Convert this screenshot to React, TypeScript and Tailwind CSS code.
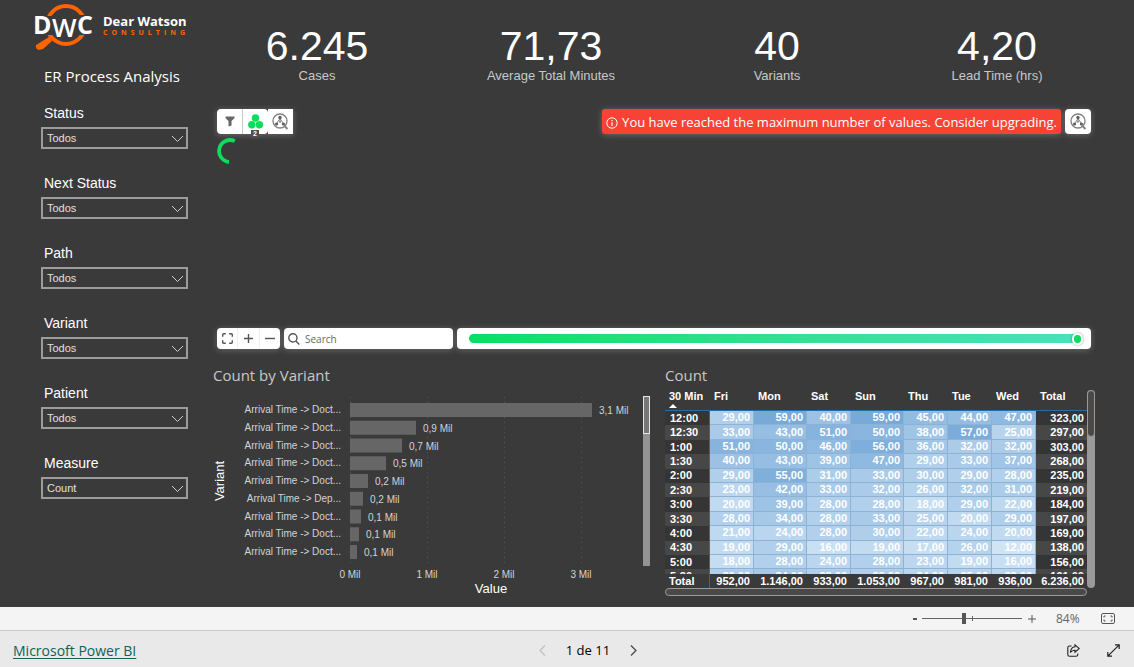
import React from "react";

const slicers = [
  { id: "status", label: "Status", value: "Todos" },
  { id: "next-status", label: "Next Status", value: "Todos" },
  { id: "path", label: "Path", value: "Todos" },
  { id: "variant", label: "Variant", value: "Todos" },
  { id: "patient", label: "Patient", value: "Todos" },
  { id: "measure", label: "Measure", value: "Count" },
];

const kpis = [
  { value: "6.245", label: "Cases" },
  { value: "71,73", label: "Average Total Minutes" },
  { value: "40", label: "Variants" },
  { value: "4,20", label: "Lead Time (hrs)" },
];

const bars = [
  { name: "Arrival Time -> Doct...", width: 242, label: "3,1 Mil" },
  { name: "Arrival Time -> Doct...", width: 66, label: "0,9 Mil" },
  { name: "Arrival Time -> Doct...", width: 52, label: "0,7 Mil" },
  { name: "Arrival Time -> Doct...", width: 36, label: "0,5 Mil" },
  { name: "Arrival Time -> Doct...", width: 18, label: "0,2 Mil" },
  { name: "Arrival Time -> Dep...", width: 13, label: "0,2 Mil" },
  { name: "Arrival Time -> Doct...", width: 11, label: "0,1 Mil" },
  { name: "Arrival Time -> Doct...", width: 9, label: "0,1 Mil" },
  { name: "Arrival Time -> Doct...", width: 7, label: "0,1 Mil" },
];

const days = ["Fri", "Mon", "Sat", "Sun", "Thu", "Tue", "Wed"];

const rows: { time: string; cells: number[]; total: string }[] = [
  { time: "12:00", cells: [29, 59, 40, 59, 45, 44, 47], total: "323,00" },
  { time: "12:30", cells: [33, 43, 51, 50, 38, 57, 25], total: "297,00" },
  { time: "1:00", cells: [51, 50, 46, 56, 36, 32, 32], total: "303,00" },
  { time: "1:30", cells: [40, 43, 39, 47, 29, 33, 37], total: "268,00" },
  { time: "2:00", cells: [29, 55, 31, 33, 30, 29, 28], total: "235,00" },
  { time: "2:30", cells: [23, 42, 33, 32, 26, 32, 31], total: "219,00" },
  { time: "3:00", cells: [20, 39, 28, 28, 18, 29, 22], total: "184,00" },
  { time: "3:30", cells: [28, 34, 28, 33, 25, 20, 29], total: "197,00" },
  { time: "4:00", cells: [21, 24, 28, 30, 22, 24, 20], total: "169,00" },
  { time: "4:30", cells: [19, 29, 16, 19, 17, 26, 12], total: "138,00" },
  { time: "5:00", cells: [18, 28, 24, 28, 23, 19, 16], total: "156,00" },
  { time: "5:30", cells: [29, 34, 28, 28, 24, 25, 23], total: "191,00" },
];

const totals = ["952,00", "1.146,00", "933,00", "1.053,00", "967,00", "981,00", "936,00", "6.236,00"];

function heat(value: number) {
  const t = (value - 12) / 47;
  const mix = (a: number, b: number) => Math.round(a + (b - a) * t);
  return `rgb(${mix(208, 120)}, ${mix(228, 170)}, ${mix(245, 217)})`;
}

function Logo() {
  return (
    <div className="flex h-[52px] items-start pl-[33px]">
      <svg width="64" height="52" viewBox="-2 0 64 52" aria-label="DWC" role="img">
        <circle cx="31" cy="25" r="19" fill="none" stroke="#ff6400" strokeWidth="4" />
        <path d="M14 37 L1 45 Q0 49 4 50 L8 49 L17 41 Z" fill="#ff6400" />
        <rect x="0" y="16" width="20" height="19" fill="#3a3a3a" />
        <rect x="41" y="15" width="20" height="20" fill="#3a3a3a" />
        <g fill="#fff" fontFamily="'Open Sans', sans-serif" fontWeight="700">
          <text x="-2" y="34" fontSize="25">D</text>
          <text x="17" y="37" fontSize="26" fontWeight="600">W</text>
          <text x="42" y="34" fontSize="25">C</text>
        </g>
      </svg>
      <div className="ml-[6px] pt-[13px]">
        <div className="whitespace-nowrap font-['Open_Sans',sans-serif] text-[13px] font-bold leading-[16px] text-white">
          Dear Watson
        </div>
        <div className="font-['Open_Sans',sans-serif] text-[7px] font-bold leading-[8px] tracking-[4px] text-[#ff6400]">
          CONSULTING
        </div>
      </div>
    </div>
  );
}

function Slicer({ id, label, value }: { id: string; label: string; value: string }) {
  return (
    <div className="flex flex-col gap-1">
      <label htmlFor={id} className="pl-[3px] text-[14px] leading-5 text-white">
        {label}
      </label>
      <div className="relative">
        <select
          id={id}
          defaultValue={value}
          className="block h-[22px] w-full appearance-none rounded-none border-2 border-[#9c9c9c] bg-[#3a3a3a] pl-1 text-[11px] leading-[16px] text-[#e0e0e0]"
        >
          <option>{value}</option>
        </select>
        <svg
          className="pointer-events-none absolute right-1 top-2"
          width="13"
          height="8"
          viewBox="0 0 13 8"
          fill="none"
          stroke="#d0d0d0"
        >
          <path d="M1 1 L6.5 6.5 L12 1" />
        </svg>
      </div>
    </div>
  );
}

function ProcessIcon() {
  return (
    <svg width="17" height="17" viewBox="0 0 17 17" fill="none" stroke="#808080" strokeWidth="1.3">
      <circle cx="8" cy="8" r="7" />
      <path d="M8 5 V8 M8 5.5 L4.6 10.5 M8 5.5 L11.4 10.5" strokeWidth="1" />
      <path d="M12 12.5 L15.5 16" strokeWidth="1.8" />
      <g fill="#606060" stroke="none">
        <circle cx="8" cy="4.5" r="1.7" />
        <circle cx="4.6" cy="11" r="1.6" />
        <circle cx="8" cy="8.8" r="0.9" />
        <circle cx="11.4" cy="11" r="1.6" />
      </g>
    </svg>
  );
}

function TopToolbar() {
  return (
    <div className="flex h-[25px] items-stretch gap-1">
      <div className="flex shadow-[0_1px_6px_rgba(255,255,255,0.25)]">
        <button aria-label="Filter" className="flex w-[25px] items-center justify-center rounded-l-[4px] bg-white">
          <svg width="10" height="11" viewBox="0 0 10 11" fill="#666">
            <path d="M0.5 0.5 H9.5 V2 L6.5 5 V9.5 L3.5 10.5 V5 L0.5 2 Z" />
          </svg>
        </button>
        <button
          aria-label="Groups"
          className="relative flex w-[26px] items-center justify-center rounded-r-[4px] border-l border-[#c8c8c8] bg-white"
        >
          <svg width="16" height="15" viewBox="0 0 16 15" fill="#0ddc5c">
            <circle cx="7.5" cy="4" r="3.7" />
            <circle cx="3.8" cy="10.7" r="3.7" />
            <circle cx="11.4" cy="10.7" r="3.7" />
          </svg>
          <span className="absolute -bottom-1 left-2 h-2 w-2 bg-[#505050] text-center text-[7px] font-bold leading-[8px] text-white">
            2
          </span>
        </button>
        <button aria-label="Process view" className="flex w-[25px] items-center justify-center bg-white">
          <ProcessIcon />
        </button>
      </div>
      <div className="flex-1" />
      <div className="flex items-center gap-1 whitespace-nowrap rounded-[3px] bg-[#f64336] px-1 pt-[2px] font-['Open_Sans',sans-serif] text-[13px] text-white shadow-[0_1px_6px_rgba(255,255,255,0.25)]">
        <svg width="12" height="12" viewBox="0 0 12 12" fill="none" stroke="#fff">
          <circle cx="6" cy="6" r="5.2" />
          <path d="M6 5.2 V9 M6 3 V4.2" strokeWidth="1.2" />
        </svg>
        You have reached the maximum number of values. Consider upgrading.
      </div>
      <button
        aria-label="Process search"
        className="flex w-[26px] items-center justify-center rounded-[4px] bg-white shadow-[0_1px_6px_rgba(255,255,255,0.25)]"
      >
        <ProcessIcon />
      </button>
    </div>
  );
}

function BottomToolbar() {
  const stroke = { fill: "none", stroke: "#555", strokeWidth: 1.4 };
  return (
    <div className="flex h-[21px] items-stretch gap-1">
      <div className="flex w-[63px] rounded-[4px] bg-white shadow-[0_1px_6px_rgba(255,255,255,0.25)]">
        <button aria-label="Fit" className="flex flex-1 items-center justify-center">
          <svg width="11" height="11" viewBox="0 0 11 11" {...stroke}>
            <path d="M0.7 3.8 V1.7 Q0.7 0.7 1.7 0.7 H3.8 M7.2 0.7 H9.3 Q10.3 0.7 10.3 1.7 V3.8 M10.3 7.2 V9.3 Q10.3 10.3 9.3 10.3 H7.2 M3.8 10.3 H1.7 Q0.7 10.3 0.7 9.3 V7.2" />
          </svg>
        </button>
        <button aria-label="Zoom in" className="flex flex-1 items-center justify-center border-l border-[#f0f0f0]">
          <svg width="9" height="9" viewBox="0 0 9 9" {...stroke}>
            <path d="M4.5 0 V9 M0 4.5 H9" />
          </svg>
        </button>
        <button aria-label="Zoom out" className="flex flex-1 items-center justify-center border-l border-[#f0f0f0]">
          <svg width="10" height="9" viewBox="0 0 10 9" {...stroke}>
            <path d="M0 4.5 H10" />
          </svg>
        </button>
      </div>
      <label className="flex w-[169px] items-center gap-[5px] rounded-[4px] bg-white pl-1 shadow-[0_1px_6px_rgba(255,255,255,0.25)]">
        <svg className="shrink-0" width="12" height="12" viewBox="0 0 12 12" {...stroke}>
          <circle cx="4.9" cy="4.9" r="4.1" />
          <path d="M7.8 8 L11.3 11.5" />
        </svg>
        <input
          type="text"
          placeholder="Search"
          aria-label="Search"
          className="w-full min-w-0 bg-transparent pt-px font-['Open_Sans',sans-serif] text-[10px] text-[#444] outline-none placeholder:text-[#666]"
        />
      </label>
      <div className="flex flex-1 items-center rounded-[4px] bg-white pl-3 pr-2 shadow-[0_1px_6px_rgba(255,255,255,0.25)]">
        <input
          type="range"
          aria-label="Detail level"
          min={0}
          max={100}
          defaultValue={100}
          className="h-[9px] w-full appearance-none rounded-full bg-linear-to-r from-[#0bdd60] to-[#46e3bb] [&::-webkit-slider-thumb]:h-[12px] [&::-webkit-slider-thumb]:w-[11px] [&::-webkit-slider-thumb]:appearance-none [&::-webkit-slider-thumb]:rounded-full [&::-webkit-slider-thumb]:border-2 [&::-webkit-slider-thumb]:border-white [&::-webkit-slider-thumb]:bg-[#0bdd60] [&::-webkit-slider-thumb]:shadow-[0_0_3px_rgba(0,0,0,0.35)]"
        />
      </div>
    </div>
  );
}

function VariantChart() {
  return (
    <svg
      className="h-[213px] w-full"
      viewBox="0 0 452 213"
      preserveAspectRatio="xMinYMin meet"
      fontFamily="'Liberation Sans', Arial, sans-serif"
      fontSize="10"
      fill="#d4d4d4"
    >
      {[0, 1, 2, 3].map((tick) => (
        <g key={tick}>
          <line
            x1={137.5 + tick * 77}
            x2={137.5 + tick * 77}
            y1="10"
            y2="179"
            stroke="#555"
            strokeDasharray="1 4"
          />
          <text x={137 + tick * 77} y="191" textAnchor="middle">
            {tick} Mil
          </text>
        </g>
      ))}
      {bars.map((bar, i) => {
        const y = 16 + i * 17.75;
        return (
          <g key={i}>
            <text x="128" y={y + 10} textAnchor="end">
              {bar.name}
            </text>
            <rect x="137" y={y} width={bar.width} height="14" fill="#666" />
            <text x={144 + bar.width} y={y + 11}>
              {bar.label}
            </text>
          </g>
        );
      })}
      <text x="278" y="206" fontSize="13" fill="#fff" textAnchor="middle">
        Value
      </text>
      <text fontSize="13" fill="#fff" textAnchor="middle" transform="translate(11 94) rotate(-90)">
        Variant
      </text>
      <rect x="430" y="9" width="7" height="170" fill="#939393" />
      <rect x="430.5" y="9.5" width="6" height="37" fill="#777" stroke="#e6e6e6" />
    </svg>
  );
}

function MatrixColumns() {
  return (
    <colgroup>
      <col className="w-[45px]" />
      <col className="w-[44px]" />
      <col className="w-[53px]" />
      <col className="w-[44px]" />
      <col className="w-[53px]" />
      <col className="w-[44px]" />
      <col className="w-[44px]" />
      <col className="w-[44px]" />
      <col className="w-[51px]" />
    </colgroup>
  );
}

function CountMatrix() {
  return (
    <div className="grid grid-cols-[422px_8px] text-[11px] font-bold leading-[13px] text-white">
      <div>
        <div className="h-[187px] overflow-hidden">
          <table className="h-[197px] w-[422px] table-fixed border-separate border-spacing-0">
            <MatrixColumns />
            <thead>
              <tr className="h-6">
                <th className="whitespace-nowrap border-b border-[#2b6ca0] pl-1 pt-[3px] text-left align-top">
                  30 Min
                  <svg className="mt-px" width="8" height="4" viewBox="0 0 8 4" fill="#fff">
                    <path d="M0 4 L4 0 L8 4 Z" />
                  </svg>
                </th>
                {[...days, "Total"].map((day) => (
                  <th key={day} className="border-b border-[#2b6ca0] pl-1 pt-[3px] text-left align-top">
                    {day}
                  </th>
                ))}
              </tr>
            </thead>
            <tbody>
              {rows.map((row) => (
                <tr key={row.time} className="bg-[#353535] even:bg-[#474747]">
                  <th className="border-r border-[#2b6ca0] pl-[5px] text-left">{row.time}</th>
                  {row.cells.map((cell, i) => (
                    <td
                      key={i}
                      className="border-b border-r border-[#8db2d3] pr-[3px] text-right"
                      style={{ backgroundColor: heat(cell) }}
                    >
                      {cell},00
                    </td>
                  ))}
                  <td className="pr-[3px] text-right">{row.total}</td>
                </tr>
              ))}
            </tbody>
          </table>
        </div>
        <table className="w-[422px] table-fixed border-separate border-spacing-0">
          <MatrixColumns />
          <tbody>
            <tr className="h-[14px]">
              <th className="border-r border-[#2b6ca0] pl-1 text-left">Total</th>
              {totals.map((total, i) => (
                <td key={i} className="pr-1 text-right last:pr-[3px]">
                  {total}
                </td>
              ))}
            </tr>
          </tbody>
        </table>
      </div>
      <div className="mt-[3px] rounded-full bg-[#9a9a9a]">
        <div className="h-[47px] rounded-full border border-[#9a9a9a] bg-[#4b4947]" />
      </div>
      <div className="h-2 rounded-full border border-[#9a9a9a] bg-[#4b4947]" />
    </div>
  );
}

function ZoomBar() {
  return (
    <div className="flex h-6 items-center justify-end border-b border-[#c8c8c8] bg-[#f4f4f4] pr-[19px] text-[#555]">
      <button aria-label="Zoom out" className="flex h-5 w-[9px] items-center">
        <svg width="4" height="2" viewBox="0 0 4 2" fill="#555">
          <rect width="4" height="2" />
        </svg>
      </button>
      <div className="relative flex w-[100px] items-center">
        <input
          type="range"
          aria-label="Zoom"
          min={0}
          max={100}
          defaultValue={42}
          className="h-px w-full appearance-none bg-[#666] [&::-webkit-slider-thumb]:h-[11px] [&::-webkit-slider-thumb]:w-1 [&::-webkit-slider-thumb]:appearance-none [&::-webkit-slider-thumb]:bg-[#555]"
        />
        <span className="absolute left-[50px] h-[5px] w-px bg-[#666]" />
      </div>
      <button aria-label="Zoom in" className="ml-[6px] flex h-5 w-2 items-center">
        <svg width="8" height="8" viewBox="0 0 8 8" stroke="#555">
          <path d="M4 0 V8 M0 4 H8" />
        </svg>
      </button>
      <span className="ml-5 w-[26px] font-['Open_Sans',sans-serif] text-[12px] text-[#666]">84%</span>
      <button aria-label="Fit to page" className="ml-[19px]">
        <svg width="14" height="11" viewBox="0 0 14 11" fill="none" stroke="#555">
          <rect x="0.5" y="0.5" width="13" height="10" rx="1.5" />
          <path d="M3 4.5 V3 H4.5 M9.5 3 H11 V4.5 M11 6.5 V8 H9.5 M4.5 8 H3 V6.5" />
        </svg>
      </button>
    </div>
  );
}

function Footer() {
  return (
    <footer className="grid h-9 grid-cols-[540fr_auto_498fr] items-center bg-[#e9e9e9] pt-[3px] font-['Open_Sans',sans-serif] text-[13px]">
      <a href="#powerbi" className="justify-self-start pl-[13px] text-[14px] text-[#0e6355] underline underline-offset-2">
        Microsoft Power BI
      </a>
      <nav aria-label="Pages" className="flex items-center gap-5 text-black">
        <button aria-label="Previous page" disabled>
          <svg width="7" height="11" viewBox="0 0 7 11" fill="none" stroke="#c0c0c0" strokeWidth="1.2">
            <path d="M6 0.5 L1 5.5 L6 10.5" />
          </svg>
        </button>
        <span>1 de 11</span>
        <button aria-label="Next page">
          <svg width="7" height="11" viewBox="0 0 7 11" fill="none" stroke="#444" strokeWidth="1.2">
            <path d="M1 0.5 L6 5.5 L1 10.5" />
          </svg>
        </button>
      </nav>
      <div className="flex items-center gap-[27px] justify-self-end pr-[14px]">
        <button aria-label="Share">
          <svg width="13" height="13" viewBox="0 0 13 13" fill="none" stroke="#222" strokeWidth="1.1">
            <path d="M4.5 2 H2.5 Q0.8 2 0.8 3.8 V10.4 Q0.8 12.2 2.5 12.2 H9 Q10.8 12.2 10.8 10.4 V9.5" />
            <path d="M8 0.8 L12.3 4.5 L8 8.2 V6.2 Q5 6 3.4 8.5 Q3.8 3.2 8 2.8 Z" />
          </svg>
        </button>
        <button aria-label="Full screen">
          <svg width="13" height="13" viewBox="0 0 13 13" fill="none" stroke="#222" strokeWidth="1.2">
            <path d="M0.8 12.2 L12.2 0.8 M8 0.8 H12.2 V5 M5 12.2 H0.8 V8" />
          </svg>
        </button>
      </div>
    </footer>
  );
}

export default function App() {
  return (
    <div className="flex min-h-screen flex-col bg-[#3a3a3a] font-['Liberation_Sans',Arial,sans-serif]">
      <main className="flex flex-1">
        <aside className="w-[213px] shrink-0">
          <Logo />
          <h1 className="mt-[13px] pl-[44px] font-['Open_Sans',sans-serif] text-[15px] leading-[22px] text-white">
            ER Process Analysis
          </h1>
          <div className="mt-4 flex flex-col gap-6 pl-[41px] pr-[25px]">
            {slicers.map((s) => (
              <Slicer key={s.id} {...s} />
            ))}
          </div>
        </aside>
        <div className="flex min-w-0 flex-1 flex-col">
          <section className="grid grid-cols-[208fr_260fr_192fr_248fr] pr-[13px] pt-6 text-center">
            {kpis.map((kpi) => (
              <div key={kpi.label}>
                <div className="text-[41px] leading-[44px] text-white">{kpi.value}</div>
                <div className="text-[13px] leading-4 text-[#c8c8c8]">{kpi.label}</div>
              </div>
            ))}
          </section>
          <section className="mt-[25px] flex min-h-[240px] flex-1 flex-col pl-1 pr-[43px]">
            <TopToolbar />
            <div className="flex-1 pt-1">
              <svg width="26" height="26" viewBox="0 0 26 26" fill="none" stroke="#0ddc5c" strokeWidth="3.8">
                <path d="M17.8 3.1 A11 11 0 1 0 12 24" />
              </svg>
            </div>
            <BottomToolbar />
          </section>
          <section className="mt-4 flex h-[242px] pr-[39px]">
            <div className="min-w-0 flex-1">
              <h2 className="pb-[2px] font-['Open_Sans',sans-serif] text-[15px] leading-5 text-[#c8c8c8]">
                Count by Variant
              </h2>
              <VariantChart />
            </div>
            <div className="w-[430px] shrink-0">
              <h2 className="pb-[2px] font-['Open_Sans',sans-serif] text-[15px] leading-5 text-[#c8c8c8]">Count</h2>
              <CountMatrix />
            </div>
          </section>
        </div>
      </main>
      <ZoomBar />
      <Footer />
    </div>
  );
}
